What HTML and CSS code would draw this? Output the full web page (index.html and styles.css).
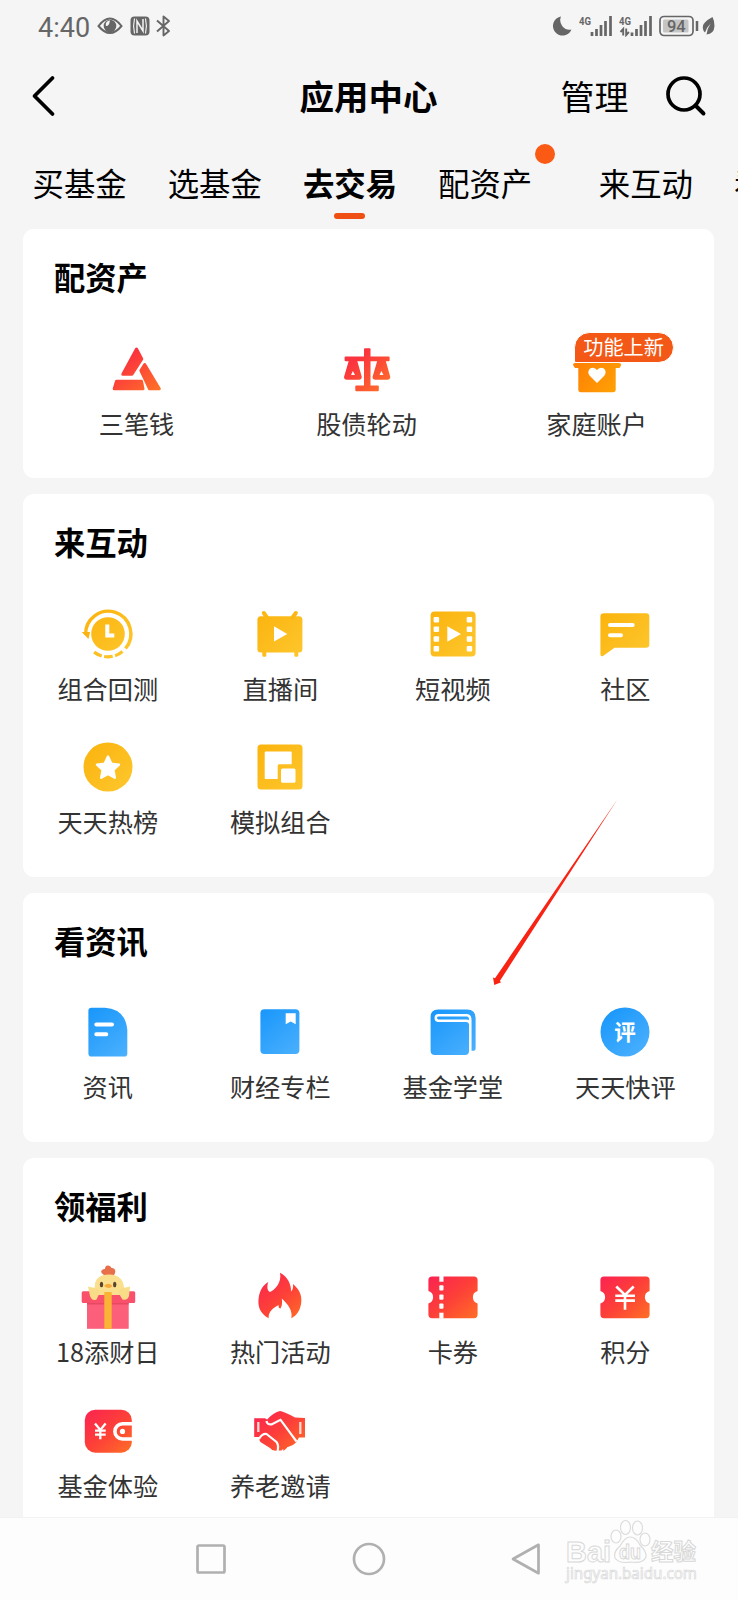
FILE: index.html
```html
<!DOCTYPE html>
<html lang="zh-CN">
<head>
<meta charset="utf-8">
<title>应用中心</title>
<link rel="stylesheet" href="styles.css">
</head>
<body>
<svg class="defs" width="0" height="0">
  <defs>
    <linearGradient id="red" gradientUnits="userSpaceOnUse" x1="14" y1="14" x2="54" y2="60"><stop offset="0" stop-color="#fb2450"/><stop offset=".5" stop-color="#fd4038"/><stop offset="1" stop-color="#ff6e26"/></linearGradient>
    <linearGradient id="scarlet" gradientUnits="userSpaceOnUse" x1="24" y1="26" x2="52" y2="60"><stop offset="0" stop-color="#fb333e"/><stop offset="1" stop-color="#ff7128"/></linearGradient>
    <linearGradient id="yellow" gradientUnits="userSpaceOnUse" x1="14" y1="14" x2="56" y2="56"><stop offset="0" stop-color="#fbb40f"/><stop offset="1" stop-color="#fdc62c"/></linearGradient>
    <linearGradient id="blue" gradientUnits="userSpaceOnUse" x1="18" y1="14" x2="54" y2="58"><stop offset="0" stop-color="#1b98fb"/><stop offset="1" stop-color="#4bb0fd"/></linearGradient>
    <linearGradient id="orange" gradientUnits="userSpaceOnUse" x1="16" y1="32" x2="52" y2="58"><stop offset="0" stop-color="#ff8204"/><stop offset="1" stop-color="#ffa004"/></linearGradient>
  </defs>
</svg>
<div class="screen">
  <header class="statusbar">
    <span class="clock">4:40</span>
    <svg class="st-eye" width="26" height="20" viewBox="0 0 26 20"><path d="M1.5 10Q13-5 24.5 10Q13 24 1.5 10Z" fill="none" stroke="#666" stroke-width="2"/><circle cx="13" cy="10" r="6.3" fill="#666"/><path d="M13 4.500a4 4 0 0 0-4 5.500q3 .5 4-5.500" fill="#f5f5f5"/></svg>
    <svg class="st-nfc" width="20" height="20" viewBox="0 0 20 20"><rect x=".5" y=".5" width="19" height="19" rx="4" fill="#666"/><path d="M4.500 17.500Q2.700 10 4.500 2.500M15.500 2.500Q17.300 10 15.500 17.500" fill="none" stroke="#f5f5f5" stroke-width="1.100"/><path d="M7 17V5L13 15V3" fill="none" stroke="#f5f5f5" stroke-width="1.500"/></svg>
    <svg class="st-bt" width="15" height="22" viewBox="0 0 15 22"><path d="M1 5.500L13 16L7.500 20.500V1.500L13 6L1 16.500" fill="none" stroke="#666" stroke-width="1.900" stroke-linejoin="round"/></svg>
    <span class="spacer"></span>
    <svg class="st-moon" width="20" height="20" viewBox="0 0 20 20"><path d="M9 .5A9.600 9.600 0 1 0 19.500 13.500A9.500 9.500 0 0 1 9 .5Z" fill="#666"/></svg>
    <svg class="st-signal" width="34" height="22" viewBox="0 0 34 22"><text x="0" y="9.500" class="net" textLength="12" lengthAdjust="spacingAndGlyphs">4G</text><path d="M13 17v4M17.500 14v7M22 10v11M26.500 6v15M31.500 1v20" stroke="#666" stroke-width="2.700"/></svg>
    <svg class="st-signal2" width="34" height="22" viewBox="0 0 34 22"><text x="0" y="9.500" class="net" textLength="12" lengthAdjust="spacingAndGlyphs">4G</text><path d="M13 17.500v3.500M17.500 14v7M22 10v11M26.500 6v15M31.500 1v20" stroke="#666" stroke-width="2.700"/><path d="M4.200 20.500v-6.500l-2.700 3M7.200 13.500v6.500l2.700-3" fill="none" stroke="#666" stroke-width="1.900"/></svg>
    <svg class="st-battery" width="41" height="22" viewBox="0 0 41 22"><rect x="1" y="1.500" width="33" height="19" rx="4" fill="none" stroke="#666" stroke-width="1.700"/><rect x="4" y="4.500" width="25.500" height="13" rx="1.500" fill="#c5c5c5"/><text x="17.300" y="16.700" class="level" text-anchor="middle">94</text><path d="M38 6v10" stroke="#666" stroke-width="2.500"/></svg>
    <svg class="st-leaf" width="14" height="20" viewBox="0 0 14 20"><path d="M10.500 1C3.500 5 0 8 1 13Q1.300 15 3 16.500Q5 11 8.700 7.500Q5.500 12 4.500 18.500Q12 18 12.500 10Q12.600 5 10.500 1Z" fill="#666"/></svg>
  </header>

  <nav class="titlebar">
    <svg class="back" width="30" height="44" viewBox="0 0 30 44"><path d="M22.500 4L4.500 22L22.500 40" fill="none" stroke="#000" stroke-width="3.800" stroke-linecap="round" stroke-linejoin="round"/></svg>
    <h1 class="page-title">应用中心</h1>
    <div class="actions">
      <span class="manage">管理</span>
      <svg class="search" width="42" height="42" viewBox="0 0 42 42"><circle cx="19" cy="19" r="16" fill="none" stroke="#000" stroke-width="3.700"/><path d="M30.500 30.500L38.500 38.500" stroke="#000" stroke-width="3.900" stroke-linecap="round"/></svg>
    </div>
  </nav>

  <div class="tabs">
    <span class="tab">买基金</span>
    <span class="tab">选基金</span>
    <span class="tab active">去交易</span>
    <span class="tab noted">配资产<i class="dot"></i></span>
    <span class="tab">来互动</span>
    <span class="tab">看资讯</span>
  </div>

  <main class="content">
    <section class="card">
      <h2 class="card-title">配资产</h2>
      <div class="grid three">
        <div class="item">
          <svg class="icon" viewBox="0 0 70 70"><g fill="url(#scarlet)" stroke="url(#scarlet)" stroke-width="3" stroke-linejoin="round"><path d="M34.500 15L39.800 25L30 40.200H20.800Z"/><path d="M14.500 47.200H39.500L41 54.800H12.200Z"/><path d="M42.700 30.500L57.300 54.800H47.500L38.900 36.500Z"/></g></svg>
          <span class="label">三笔钱</span>
        </div>
        <div class="item">
          <svg class="icon" viewBox="0 0 70 70"><g fill="url(#scarlet)"><rect x="32" y="14.300" width="6.500" height="40" rx="1"/><rect x="12.600" y="22.500" width="45" height="4.800" rx="1"/><rect x="23.300" y="51.500" width="23.500" height="5.800" rx="1"/><path fill-rule="evenodd" d="M17 26H25L29.800 43Q29.500 45.700 27 45.700H14.700Q12.200 45.700 12 43ZM20.900 37L19 41H23Z"/><path fill-rule="evenodd" d="M45.500 26H53.500L58.300 43Q58 45.700 55.500 45.700H43.200Q40.700 45.700 40.500 43ZM49.400 37L47.500 41H51.500Z"/></g></svg>
          <span class="label">股债轮动</span>
        </div>
        <div class="item">
          <svg class="icon" viewBox="0 0 70 70"><path d="M11 31Q11 29 13 29H57Q59 29 59.300 31L57.500 34H53.700V55.500Q53.700 58.300 51 58.300H19Q16.300 58.300 16.300 55.500V34H13Z" fill="url(#orange)"/><path d="M35 49L27.500 41.500C24.500 37 28 33.500 31 33.700Q33.500 33.900 35 36Q36.500 33.900 39 33.700C42 33.500 45.500 37 42.500 41.500Z" fill="#fff"/></svg>
          <span class="badge">功能上新</span>
          <span class="label">家庭账户</span>
        </div>
      </div>
    </section>

    <section class="card">
      <h2 class="card-title">来互动</h2>
      <div class="grid">
        <div class="item">
          <svg class="icon" viewBox="0 0 70 70"><circle cx="35" cy="35" r="16.800" fill="url(#yellow)"/><path d="M12.700 36A22.600 22.600 0 1 1 52.500 49.500" fill="none" stroke="url(#yellow)" stroke-width="3.400"/><path d="M49.500 52.500A22.600 22.600 0 0 1 21 53" fill="none" stroke="url(#yellow)" stroke-width="3.200" stroke-dasharray="8.500 2.500"/><path d="M8.700 33H17L15.500 40Z" fill="#fbb40f"/><path d="M34.300 25.500V36.500H41.300" fill="none" stroke="#fff" stroke-width="4"/></svg>
          <span class="label">组合回测</span>
        </div>
        <div class="item">
          <svg class="icon" viewBox="0 0 70 70"><g fill="url(#yellow)"><rect x="12.400" y="17.300" width="45" height="36.200" rx="3.500"/><rect x="17.300" y="50" width="4" height="7.700" rx="1.500"/><rect x="49.300" y="50" width="4" height="7.700" rx="1.500"/></g><path d="M18.800 14L22.300 19M50.800 14L47.300 19" stroke="#fbb815" stroke-width="4" stroke-linecap="round"/><path d="M29 27.300L42.300 35L29 42.500Z" fill="#fff"/></svg>
          <span class="label">直播间</span>
        </div>
        <div class="item">
          <svg class="icon" viewBox="0 0 70 70"><rect x="12.600" y="12.400" width="45" height="45" rx="4" fill="url(#yellow)"/><g fill="#fff"><rect x="15.600" y="18" width="5.500" height="5.500" rx="1"/><rect x="15.600" y="27.600" width="5.500" height="5.500" rx="1"/><rect x="15.600" y="37.300" width="5.500" height="5.500" rx="1"/><rect x="15.600" y="47" width="5.500" height="5.500" rx="1"/><rect x="48.700" y="18" width="5.500" height="5.500" rx="1"/><rect x="48.700" y="27.600" width="5.500" height="5.500" rx="1"/><rect x="48.700" y="37.300" width="5.500" height="5.500" rx="1"/><rect x="48.700" y="47" width="5.500" height="5.500" rx="1"/><path d="M29.300 27.300L43 35L29.300 42.700Z"/></g></svg>
          <span class="label">短视频</span>
        </div>
        <div class="item">
          <svg class="icon" viewBox="0 0 70 70"><path d="M14 14.300H56Q59.300 14.300 59.300 17.500V45.500Q59.300 48.700 56 48.700H24.500L13 57Q10.400 58 10.400 55V17.500Q10.400 14.300 14 14.300Z" fill="url(#yellow)"/><path d="M20 26H42.700M20 36.200H31" stroke="#fff" stroke-width="4" stroke-linecap="round"/></svg>
          <span class="label">社区</span>
        </div>
        <div class="item">
          <svg class="icon" viewBox="0 0 70 70"><circle cx="35" cy="35" r="24.500" fill="url(#yellow)"/><path d="M35 24.500L38.300 31.600L46 32.600L40.400 38L41.800 45.700L35 42L28.200 45.700L29.600 38L24 32.600L31.700 31.600Z" fill="#fff" stroke="#fff" stroke-width="2.400" stroke-linejoin="round"/></svg>
          <span class="label">天天热榜</span>
        </div>
        <div class="item">
          <svg class="icon" viewBox="0 0 70 70"><rect x="12.500" y="12.500" width="45" height="45" rx="3.500" fill="url(#yellow)"/><path d="M20.500 19.500H46Q46.700 19.500 46.700 20.500V32.300H34Q32.700 32.300 32.700 34V47H20.500Q19.700 47 19.700 46V20.500Q19.700 19.500 20.500 19.500Z" fill="#fff"/><rect x="36" y="36.600" width="14.500" height="14.200" rx="1.500" fill="#fff"/></svg>
          <span class="label">模拟组合</span>
        </div>
      </div>
    </section>

    <section class="card">
      <h2 class="card-title">看资讯</h2>
      <div class="grid">
        <div class="item">
          <svg class="icon" viewBox="0 0 70 70"><path d="M18.500 10.700H32Q52.500 12 54.300 33V56.500Q54.300 59.600 51.300 59.600H18.500Q15.400 59.600 15.400 56.500V13.700Q15.400 10.700 18.500 10.700Z" fill="url(#blue)"/><path d="M23.300 27.400H39M23.300 37.300H33.300" stroke="#fff" stroke-width="4" stroke-linecap="round"/></svg>
          <span class="label">资讯</span>
        </div>
        <div class="item">
          <svg class="icon" viewBox="0 0 70 70"><rect x="15.400" y="12.300" width="39" height="44.800" rx="4" fill="url(#blue)"/><path d="M40.700 16.300H50.700V27.300L45.700 24.500L40.700 27.300Z" fill="#fff"/></svg>
          <span class="label">财经专栏</span>
        </div>
        <div class="item">
          <svg class="icon" viewBox="0 0 70 70"><path d="M20 12.500H49Q57.600 12.500 57.600 21V51.700Q57.600 53.700 55.600 53.700H51V54Q51 58 47 58H17Q12.600 58 12.600 53.500V20Q12.600 12.500 20 12.500Z" fill="url(#blue)"/><path d="M52.300 58V28Q52.300 23.700 48 23.700H20.500A2.700 2.700 0 0 1 20.500 18.300H48.500Q52.300 18.300 52.300 23V28" fill="none" stroke="#fff" stroke-width="2.500"/></svg>
          <span class="label">基金学堂</span>
        </div>
        <div class="item">
          <svg class="icon" viewBox="0 0 70 70"><circle cx="35" cy="35" r="24.500" fill="url(#blue)"/><text x="35" y="43" class="glyph" text-anchor="middle">评</text></svg>
          <span class="label">天天快评</span>
        </div>
      </div>
    </section>

    <section class="card">
      <h2 class="card-title">领福利</h2>
      <div class="grid">
        <div class="item">
          <svg class="icon" viewBox="0 0 70 70"><rect x="14" y="38" width="41.700" height="28.800" fill="#fc5f7a"/><rect x="8.700" y="29.300" width="53.500" height="11.700" rx="1.500" fill="#f9516b"/><path d="M14 41H55.700V42.500H14Z" fill="#e94863"/><path d="M31 13Q26.500 10.500 29 8Q31 6.500 32 7Q32 3 35.500 3.500Q38 4 38.500 6Q42 6 42.300 9Q42.500 12 40 14Z" fill="#e96f4b"/><path d="M22 27Q20 13 36 12.500Q51 13 51 27L48 33H24Z" fill="#fae08e"/><path d="M15 24.500L19 25.500Q26 25 26.500 31L23.500 37.500Q19 39.500 17 34ZM57 24.500L53 25.500Q46 25 45.500 31L49.500 37.500Q54 39 56 34Z" fill="#f9dc87"/><path d="M31.300 30H38.700V66.800H31.300Z" fill="#fbb336"/><ellipse cx="28.500" cy="22.500" rx="1.700" ry="2.800" fill="#58432c"/><ellipse cx="41.700" cy="22.500" rx="1.700" ry="2.800" fill="#58432c"/><path d="M31 24Q35 19.500 39.500 24Q36 28 31 24Z" fill="#f6aa39"/></svg>
          <span class="label">18添财日</span>
        </div>
        <div class="item">
          <svg class="icon" viewBox="0 0 70 70"><path d="M23.700 56.300C14 51 12.500 43 13.800 35C15 28 18 23 23.300 20C21.500 25 22.500 29 25 30C30 28 37 20 35 10.700C42 14 46.500 22 46 29.500C47.500 28 48.500 26 48 22C54 27 57 33 56.300 40C55.500 48 52 53.500 46.300 56.300C48 49 43 42 36.800 36.500C37.500 41 37 44 35.500 46.500Q33.500 46.500 33.500 43C28 46 23 50 23.700 56.300Z" fill="url(#red)"/></svg>
          <span class="label">热门活动</span>
        </div>
        <div class="item">
          <svg class="icon" viewBox="0 0 70 70"><path d="M14 14.500H56Q59.600 14.500 59.600 18V29A6.500 6.500 0 0 0 59.600 41.500V52.500Q59.600 56.200 56 56.200H14Q10.400 56.200 10.400 52.500V41.500A6.500 6.500 0 0 0 10.400 29V18Q10.400 14.500 14 14.500Z" fill="url(#red)"/><g fill="#fff"><rect x="21.300" y="14" width="4.200" height="5.700"/><rect x="21.300" y="23.300" width="4.200" height="5.200" rx="1"/><rect x="21.300" y="32.500" width="4.200" height="5.200" rx="1"/><rect x="21.300" y="41.500" width="4.200" height="5.200" rx="1"/><rect x="21.300" y="50.700" width="4.200" height="6"/></g></svg>
          <span class="label">卡券</span>
        </div>
        <div class="item">
          <svg class="icon" viewBox="0 0 70 70"><path d="M14 14.500H56Q59.600 14.500 59.600 18V29A6.500 6.500 0 0 0 59.600 41.500V52.500Q59.600 56.200 56 56.200H14Q10.400 56.200 10.400 52.500V41.500A6.500 6.500 0 0 0 10.400 29V18Q10.400 14.500 14 14.500Z" fill="url(#red)"/><path d="M26.300 24.500L35 33L43.700 24.500M25.300 33.700H45M25.300 38.600H45M35 33V47.700" fill="none" stroke="#fff" stroke-width="2.600"/></svg>
          <span class="label">积分</span>
        </div>
        <div class="item">
          <svg class="icon" viewBox="0 0 70 70"><rect x="11.800" y="13.700" width="47" height="43" rx="10.500" fill="url(#red)"/><path d="M22 27.500L27.300 34L32.600 27.500M22 34.700H32.700M22 38.700H32.700M27.300 34V43.300" fill="none" stroke="#fff" stroke-width="2.300"/><path d="M60 27.800H49.500A7.600 7.600 0 0 0 49.500 43H60" fill="none" stroke="#fff" stroke-width="3.600"/><circle cx="49.500" cy="35.400" r="2.600" fill="#fff"/></svg>
          <span class="label">基金体验</span>
        </div>
        <div class="item">
          <svg class="icon" viewBox="0 0 70 70"><path d="M9.200 22.300H20L22 23.500Q29 16 35 15Q38 15 50 21.500L60 22V41.500H54L51 46.500Q48 50 43 51L39 54.500H34.500L31 54.800Q27 55 25 52L17 47Q13.500 45 14.500 41H9.200Z" fill="url(#red)"/><path d="M21.500 25Q22 29 27 28.300L35.500 23.800Q39.500 29 51.500 45.500M14 43Q17 37.500 21.500 38L31.500 46Q34 49 32.500 55.500" fill="none" stroke="#fff" stroke-width="2.200"/><path d="M13.300 26V36M55.300 26V38" stroke="#ffd9d4" stroke-width="2.300"/><path d="M37 55.500L38 53.500M42.500 53L42.700 51.200" stroke="#fff" stroke-width="1.300"/></svg>
          <span class="label">养老邀请</span>
        </div>
      </div>
    </section>
  </main>

  <footer class="sysnav">
    <svg width="34" height="34" viewBox="0 0 34 34"><rect x="3.500" y="3.500" width="27" height="27" rx="1.500"/></svg>
    <svg width="36" height="36" viewBox="0 0 36 36"><circle cx="18" cy="18" r="15"/></svg>
    <svg width="34" height="36" viewBox="0 0 34 36"><path d="M29.500 3.800V32.200L4 18Z" stroke-linejoin="round"/></svg>
  </footer>

  <svg class="arrow" width="130" height="192" viewBox="490 796 130 192"><path d="M617.700 799L499.800 981L501.200 982.300L494.300 984.900L493 977.500L495 978.300Z" fill="#f92314"/></svg>

  <svg class="watermark" width="142" height="80" viewBox="560 1516 142 80">
    <g class="wm-shape"><ellipse cx="616" cy="1536.500" rx="5" ry="6.500"/><ellipse cx="625.500" cy="1527.500" rx="5" ry="7"/><ellipse cx="637.500" cy="1528" rx="5" ry="7"/><ellipse cx="645" cy="1539.500" rx="5" ry="6.500"/><path d="M630 1537Q636 1537 640 1545Q647 1552 646 1557Q643 1564 631 1562Q619 1564 615 1558Q613 1552 620 1546Q625 1537 630 1537Z"/></g>
    <text class="wm-brand" x="566" y="1561.500" textLength="45" lengthAdjust="spacingAndGlyphs">Bai</text>
    <text class="wm-du" x="619" y="1559" textLength="22" lengthAdjust="spacingAndGlyphs">du</text>
    <text class="wm-cn" x="651" y="1560" textLength="45">经验</text>
    <text class="wm-url" x="566" y="1578.500" textLength="131" lengthAdjust="spacingAndGlyphs">jingyan.baidu.com</text>
  </svg>
</div>
</body>
</html>
```
FILE: styles.css
```css
* { box-sizing: border-box; }

body {
  margin: 0;
  background: #f5f5f5;
  color: #000;
  font-family: "Noto Sans CJK SC", "Noto Sans", sans-serif;
}

.defs { position: absolute; }

.screen {
  position: relative;
  display: flex;
  flex-direction: column;
  width: 738px;
  height: 1600px;
  overflow: hidden;
}

/* status bar */
.statusbar {
  display: flex;
  align-items: center;
  flex: none;
  height: 52px;
  padding: 0 22px 0 38px;
}
.clock {
  width: 59px;
  font: 400 27px/52px Roboto, sans-serif;
  color: #666;
  padding-top: 3px;
}
.st-nfc { margin-left: 7px; }
.st-bt { margin-left: 6px; }
.spacer { flex: 1; }
.st-signal { margin-left: 7px; }
.st-signal2 { margin-left: 6px; }
.st-battery { margin-left: 6px; }
.st-leaf { margin-left: 2px; }
.net { font: 700 11.5px Roboto, sans-serif; fill: #666; }
.level { font: 500 16.5px Roboto, sans-serif; fill: #666; }

/* title bar */
.titlebar {
  display: grid;
  grid-template-columns: 1fr auto 1fr;
  align-items: center;
  flex: none;
  height: 88px;
  padding: 0 31px 0 30px;
}
.page-title {
  margin: 0;
  font-size: 34.5px;
  font-weight: 700;
  line-height: 84px;
  padding-bottom: 3px;
}
.actions {
  display: flex;
  align-items: center;
  justify-content: flex-end;
}
.manage {
  font-size: 34px;
  line-height: 40px;
  margin-right: 36.5px;
}

/* tabs */
.tabs {
  display: flex;
  gap: 41px;
  flex: none;
  height: 89px;
  padding-left: 32.5px;
  overflow: hidden;
}
.tab {
  position: relative;
  flex: none;
  font-size: 31.4px;
  line-height: 85px;
}
.active { font-weight: 700; }
.active::after {
  content: "";
  position: absolute;
  left: 31px;
  top: 73px;
  width: 31px;
  height: 6px;
  border-radius: 3px;
  background: #f04f14;
}
.noted { margin-right: 25.5px; }
.dot {
  position: absolute;
  left: 96.5px;
  top: 3.5px;
  width: 20.6px;
  height: 20.6px;
  border-radius: 50%;
  background: #fa5a14;
}

/* cards */
.content {
  display: flex;
  flex-direction: column;
  gap: 16px;
  flex: 1;
  min-height: 0;
  overflow: hidden;
  padding: 0.4px 24px 0 22.5px;
}
.card {
  flex: none;
  padding-bottom: 16.6px;
  border-radius: 11px;
  background: #fff;
}
.card-title {
  margin: 0;
  padding-left: 31.5px;
  font-size: 31.3px;
  font-weight: 700;
  line-height: 96.4px;
  height: 99px;
}
.grid {
  display: grid;
  grid-template-columns: repeat(4, 1fr);
  grid-auto-rows: 133.4px;
  margin-left: -1px;
  padding-right: 2.4px;
}
.three { grid-template-columns: repeat(3, 1fr); }
.item {
  position: relative;
  display: flex;
  flex-direction: column;
  align-items: center;
  padding-top: 5.4px;
}
.icon { display: block; width: 70px; height: 70px; flex: none; }
.label {
  font-size: 25.2px;
  line-height: 39px;
  color: #333;
}
.glyph { font-size: 21.5px; font-weight: 700; fill: #fff; }
.badge {
  position: absolute;
  left: calc(50% - 23px);
  top: 3.4px;
  width: 100px;
  height: 31px;
  border: 1px solid #fff;
  border-radius: 16px 16px 16px 2px;
  background: #f35816;
  color: #fff;
  font-size: 20.2px;
  line-height: 27px;
  text-align: center;
}

/* system navigation */
.sysnav {
  display: flex;
  align-items: center;
  gap: 122.5px;
  flex: none;
  height: 83px;
  padding-left: 194px;
  border-top: 1px solid #f2f2f2;
  background: #fdfdfd;
}
.sysnav svg { flex: none; fill: none; stroke: #b0b0b0; stroke-width: 2.7; }

/* overlays */
.arrow { position: absolute; left: 490px; top: 796px; }
.watermark { position: absolute; left: 560px; top: 1516px; }
.wm-shape { fill: #fdfdfd; stroke: #dcdcdc; stroke-width: 1.2; }
.watermark text { fill: #fdfdfd; stroke: #d8d8d8; stroke-width: 1; }
.wm-brand { font: 700 30px "Liberation Sans", sans-serif; }
.wm-du { font: 700 20px "Liberation Sans", sans-serif; }
.wm-cn { font: 700 22.5px "Noto Sans CJK SC", sans-serif; }
.watermark .wm-url { font: 400 16px "Noto Sans", sans-serif; stroke-width: .7; }
```
